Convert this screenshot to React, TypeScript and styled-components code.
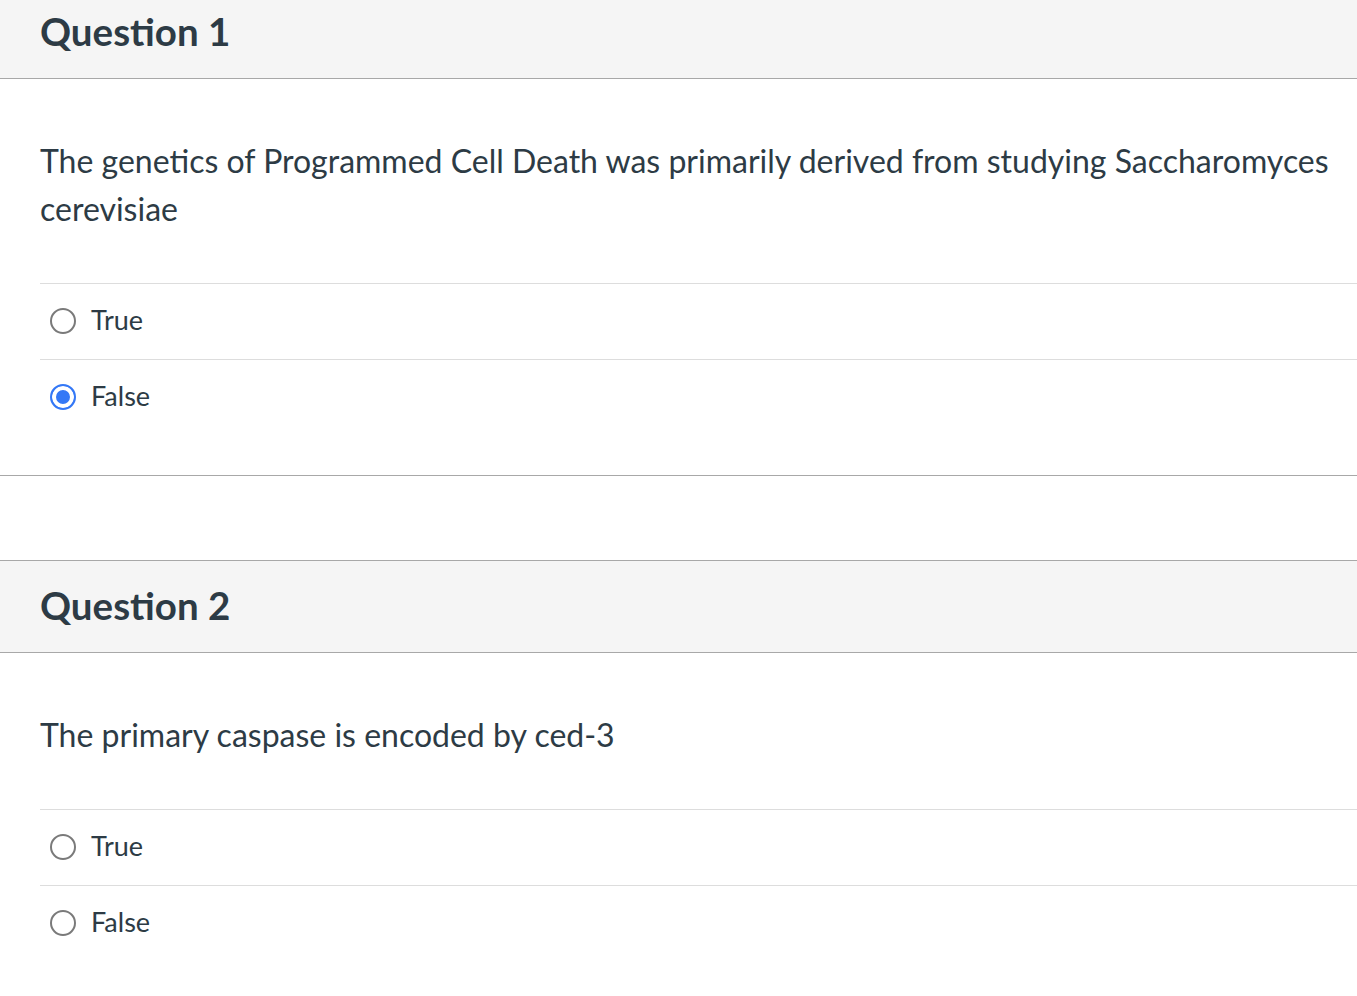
import styled, { createGlobalStyle } from "styled-components";

const GlobalStyle = createGlobalStyle`
  html, body {
    margin: 0;
    padding: 0;
    background: #ffffff;
  }
  body {
    font-family: Lato, "Open Sans", "Liberation Sans", sans-serif;
    color: #2d3b45;
    overflow: hidden;
  }
`;

const Page = styled.div`
  display: flex;
  flex-direction: column;
  gap: 84px;
  margin-top: -14px;
`;

const Card = styled.section`
  border-bottom: 1px solid #a8a8a8;
  padding-bottom: 40px;
`;

const Header = styled.header`
  display: flex;
  align-items: center;
  height: 87px;
  padding: 0 40px 4px;
  background: #f5f5f5;
  border-top: 1px solid #a8a8a8;
  border-bottom: 1px solid #a8a8a8;
`;

const Title = styled.h2`
  margin: 0;
  font-size: 38.5px;
  font-weight: 700;
  letter-spacing: 0;
`;

const Prompt = styled.p`
  margin: 0;
  padding: 58px 20px 50px 40px;
  font-size: 32px;
  line-height: 48px;
`;

const Answers = styled.div`
  margin-left: 40px;
  display: flex;
  flex-direction: column;
`;

const Option = styled.label`
  display: flex;
  align-items: center;
  gap: 15px;
  height: 75px;
  padding-left: 10px;
  border-top: 1px solid #dddddd;
  font-size: 27px;
  cursor: pointer;
`;

const OptionText = styled.span`
  position: relative;
  top: -2px;
`;

const Radio = styled.input.attrs({ type: "radio" })`
  appearance: none;
  -webkit-appearance: none;
  margin: 0 0 2px;
  width: 26px;
  height: 26px;
  border-radius: 50%;
  border: 2px solid #7a7a7a;
  background: #ffffff;
  box-sizing: border-box;
  flex: none;

  &:checked {
    border-color: #3478f6;
    background: #3478f6;
    box-shadow: inset 0 0 0 4px #ffffff;
  }
`;

type Question = {
  title: string;
  text: string;
  answer: string | null;
};

const questions: Question[] = [
  {
    title: "Question 1",
    text: "The genetics of Programmed Cell Death was primarily derived from studying Saccharomyces cerevisiae",
    answer: "False",
  },
  {
    title: "Question 2",
    text: "The primary caspase is encoded by ced-3",
    answer: null,
  },
];

const choices = ["True", "False"];

export default function App() {
  return (
    <>
      <GlobalStyle />
      <Page>
        {questions.map((q, i) => (
          <Card key={q.title}>
            <Header>
              <Title>{q.title}</Title>
            </Header>
            <Prompt>{q.text}</Prompt>
            <Answers>
              {choices.map((c) => (
                <Option key={c}>
                  <Radio
                    name={`q${i}`}
                    defaultChecked={q.answer === c}
                  />
                  <OptionText>{c}</OptionText>
                </Option>
              ))}
            </Answers>
          </Card>
        ))}
      </Page>
    </>
  );
}
